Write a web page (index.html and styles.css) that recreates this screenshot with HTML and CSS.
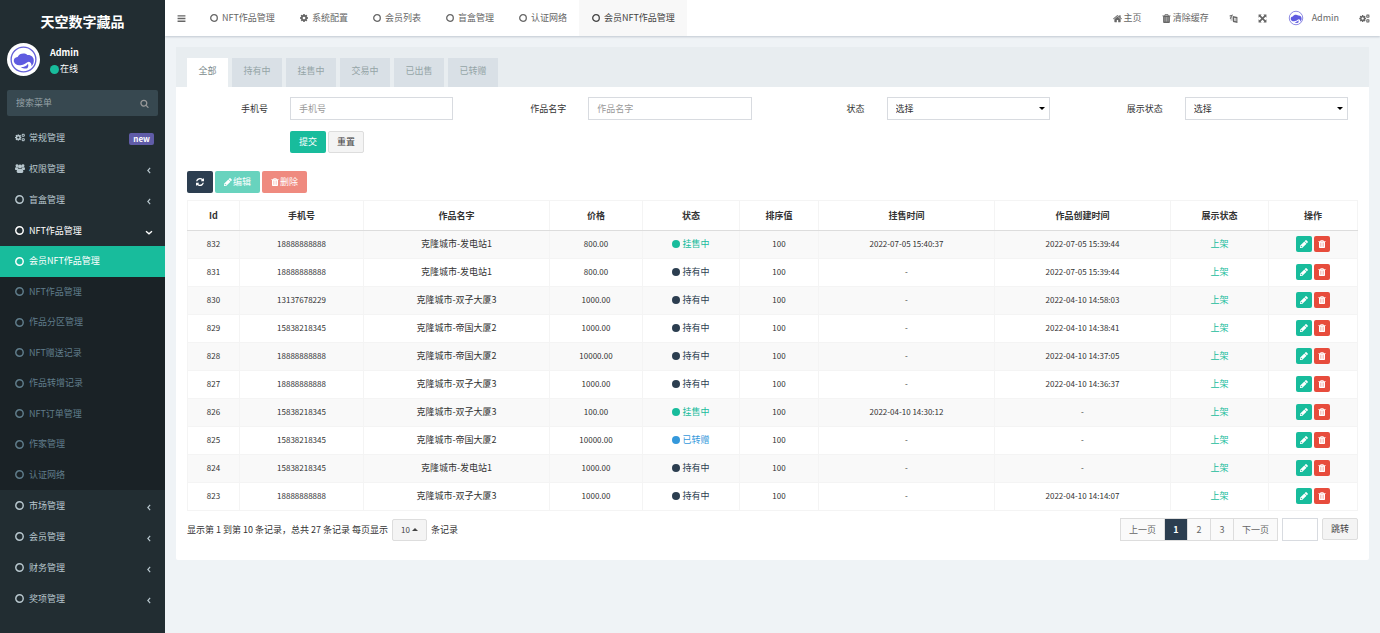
FILE: index.html
```html
<!DOCTYPE html>
<html lang="zh-CN">
<head>
    <meta charset="UTF-8">
    <meta name="viewport" content="width=device-width, initial-scale=1.0">
    <title>会员NFT作品管理</title>
    <link rel="stylesheet" href="styles.css">
</head>
<body>

    <svg class="sprite" aria-hidden="true">
        <symbol id="i-circle" viewBox="0 0 16 16"><circle cx="8" cy="8" r="6.6" fill="none" stroke="currentColor" stroke-width="2.600"/></symbol>
        <symbol id="i-dot" viewBox="0 0 16 16"><circle cx="8" cy="8" r="8"/></symbol>
        <symbol id="i-bars" viewBox="0 0 16 16"><path d="M1 2h14v2.400H1zM1 6.800h14v2.400H1zM1 11.600h14V14H1z"/></symbol>
        <symbol id="i-cog" viewBox="128 128 1536 1536"><path d="M1152 896q0-106-75-181t-181-75-181 75-75 181 75 181 181 75 181-75 75-181zm512-109v222q0 12-8 23t-20 13l-185 28q-19 54-39 91 35 50 107 138 10 12 10 25t-9 23q-27 37-99 108t-94 71q-12 0-26-9l-138-108q-44 23-91 38-16 136-29 186-7 28-36 28h-222q-14 0-24.5-8.5t-11.5-21.5l-28-184q-49-16-90-37l-141 107q-10 9-25 9-14 0-25-11-126-114-165-168-7-10-7-23 0-12 8-23 15-21 51-66.5t54-70.5q-27-50-41-99l-183-27q-13-2-21-12.5t-8-23.5v-222q0-12 8-23t19-13l186-28q14-46 39-92-40-57-107-138-10-12-10-24 0-10 9-23 26-36 98.5-107.5t94.5-71.5q13 0 26 10l138 107q44-23 91-38 16-136 29-186 7-28 36-28h222q14 0 24.5 8.5t11.5 21.5l28 184q49 16 90 37l142-107q9-9 24-9 13 0 25 10 129 119 165 170 7 8 7 22 0 12-8 23-15 21-51 66.5t-54 70.5q26 50 41 98l183 28q13 2 21 12.5t8 23.5z"/></symbol>
        <symbol id="i-cogs" viewBox="0 0 19 16">
            <use href="#i-cog" x="0" y="1.800" width="12.500" height="12.500"/>
            <use href="#i-cog" x="12" y="0" width="7" height="7.500"/>
            <use href="#i-cog" x="12" y="8.500" width="7" height="7.500"/>
        </symbol>
        <symbol id="i-group" viewBox="0 0 18 16"><circle cx="3.600" cy="3" r="2.600"/><circle cx="14.400" cy="3" r="2.600"/><circle cx="9" cy="4.600" r="3.600"/><path d="M0 8.400C0 6.600.6 5.600 2 5.600h3c.2 1.400.8 2.600 1.800 3.400-1.600.2-2.600.8-3 1.600H1.800C.7 10.600 0 10 0 8.400zM18 8.400c0-1.800-.6-2.800-2-2.800h-3c-.2 1.400-.8 2.600-1.800 3.400 1.600.2 2.600.8 3 1.600h2c1.100 0 1.800-.6 1.800-2.200zM3 13.600C3 10.800 4.200 8.800 6 8.800h6c1.800 0 3 2 3 4.800 0 1.500-1 2.400-2.400 2.400H5.400C4 16 3 15.100 3 13.600z"/></symbol>
        <symbol id="i-search" viewBox="0 0 1792 1792"><path d="M1216 832q0-185-131.5-316.5t-316.5-131.5-316.5 131.5-131.5 316.5 131.5 316.5 316.5 131.5 316.5-131.5 131.5-316.5zm512 832q0 52-38 90t-90 38q-54 0-90-38l-343-342q-179 124-399 124-143 0-273.5-55.5t-225-150-150-225-55.5-273.5 55.5-273.5 150-225 225-150 273.5-55.5 273.5 55.5 225 150 150 225 55.5 273.5q0 220-124 399l343 343q37 37 37 90z"/></symbol>
        <symbol id="i-home" viewBox="64 128 1664 1472"><path d="M1472 992v480q0 26-19 45t-45 19h-384v-384h-256v384h-384q-26 0-45-19t-19-45v-480q0-1 .5-3t.5-3l575-474 575 474q1 2 1 6zm223-69l-62 74q-8 9-21 11h-3q-13 0-21-7l-692-577-692 577q-12 8-24 7-13-2-21-11l-62-74q-8-10-7-23.5t11-21.5l719-599q32-26 76-26t76 26l244 204v-195q0-14 9-23t23-9h192q14 0 23 9t9 23v408l219 182q10 8 11 21.5t-7 23.5z"/></symbol>
        <symbol id="i-trash" viewBox="128 128 1536 1536"><path d="M704 1376v-704q0-14-9-23t-23-9h-64q-14 0-23 9t-9 23v704q0 14 9 23t23 9h64q14 0 23-9t9-23zm256 0v-704q0-14-9-23t-23-9h-64q-14 0-23 9t-9 23v704q0 14 9 23t23 9h64q14 0 23-9t9-23zm256 0v-704q0-14-9-23t-23-9h-64q-14 0-23 9t-9 23v704q0 14 9 23t23 9h64q14 0 23-9t9-23zm-544-992h448l-48-117q-7-9-17-11h-317q-10 2-17 11zm928 32v64q0 14-9 23t-23 9h-96v948q0 83-47 143.5t-113 60.5h-832q-66 0-113-58.5t-47-141.5v-952h-96q-14 0-23-9t-9-23v-64q0-14 9-23t23-9h309l70-167q15-37 54-63t79-26h320q40 0 79 26t54 63l70 167h309q14 0 23 9t9 23z"/><path d="M500 600h800v850H500z" opacity=".5"/></symbol>
        <symbol id="i-pencil" viewBox="128 128 1536 1536"><path d="M491 1536l91-91-235-235-91 91v107h128v128h107zm469-1120l416 416-832 832h-416v-416zm683 96q0 53-37 90l-166 166-416-416 166-165q36-38 90-38 53 0 91 38l235 234q37 39 37 91z"/></symbol>
        <symbol id="i-refresh" viewBox="128 128 1536 1536"><path d="M1639 1056q0 5-1 7-64 268-268 434.5t-478 166.5q-146 0-282.5-55t-243.5-157l-129 129q-19 19-45 19t-45-19-19-45v-448q0-26 19-45t45-19h448q26 0 45 19t19 45-19 45l-137 137q71 66 161 102t187 36q134 0 250-65t186-179q11-17 53-117 8-23 30-23h192q13 0 22.5 9.500t9.500 22.500zm25-800v448q0 26-19 45t-45 19h-448q-26 0-45-19t-19-45 19-45l138-138q-148-137-349-137-134 0-250 65t-186 179q-11 17-53 117-8 23-30 23h-199q-13 0-22.500-9.500t-9.500-22.500v-7q65-268 270-434.500t480-166.500q146 0 284 55.500t245 156.500l130-129q19-19 45-19t45 19 19 45z"/></symbol>
        <symbol id="i-lang" viewBox="0 0 16 16"><path d="M1 2.500l6-1.500v1.800l-2 .5c.2 2-.6 4-2.600 5.700L1.200 7.800C2.600 6.600 3.300 5.200 3.200 3.700L1 4.200zM7 3.500l8 2V16l-8-2zm2 3v5.500l4 1V7.500z"/><path d="M1 4h6v8H3z" opacity=".35"/><path d="M9.700 7.500h2.600v4.800H9.700z" opacity=".45"/></symbol>
        <symbol id="i-expand" viewBox="0 0 16 16"><path d="M1 1h5.500L4.800 2.700 8 5.900l3.200-3.200L9.500 1H15v5.500l-1.700-1.700L10.100 8l3.200 3.200L15 9.500V15H9.500l1.700-1.700L8 10.100l-3.200 3.200L6.500 15H1V9.500l1.700 1.700L5.900 8 2.700 4.800 1 6.500z"/></symbol>
        <symbol id="i-left" viewBox="0 0 8 12"><path d="M6 1.500L2 6l4 4.500" fill="none" stroke="currentColor" stroke-width="2"/></symbol>
        <symbol id="i-down" viewBox="0 0 12 8"><path d="M1.500 2L6 6l4.500-4" fill="none" stroke="currentColor" stroke-width="2"/></symbol>
        <symbol id="i-logo" viewBox="0 0 32 32">
            <circle cx="16" cy="16" r="16" fill="#fff"/>
            <circle cx="16" cy="16" r="12" fill="none" stroke="#6460d8" stroke-width="1.300"/>
            <path d="M6.800 18.500C6 15.800 7.800 13.600 10.300 13.500 12 10 17 9.200 19.800 11.700 23.200 11.300 26 13.700 26 17c0 2.300-.8 4.300-2.200 5.500.1-2.300-.9-3.800-2.600-4.200-2.200.2-3.300 2.900-7 3-3.500.9-6.700-.2-7.400-2.800z" fill="#5f5be0"/>
            <path d="M13.500 23.300c3.200 0 5.600-1.200 6.800-3.300.7 1.600.4 3.200-.6 4.600-2.200.6-4.500 0-6.200-1.300z" fill="#5f5be0"/>
        </symbol>
    </svg>

    <aside class="sidebar">
        <a href="#" class="brand">天空数字藏品</a>
        <div class="user-panel">
            <svg class="avatar"><use href="#i-logo"/></svg>
            <div class="user-info">
                <strong>Admin</strong>
                <span><svg class="icon text-success"><use href="#i-dot"/></svg> 在线</span>
            </div>
        </div>
        <form class="sidebar-form">
            <input type="text" placeholder="搜索菜单" aria-label="搜索菜单">
            <button type="button" aria-label="搜索"><svg class="icon"><use href="#i-search"/></svg></button>
        </form>
        <ul class="menu">
            <li><a href="#"><svg class="icon icon-wide"><use href="#i-cogs"/></svg>常规管理<span class="badge">new</span></a></li>
            <li><a href="#"><svg class="icon icon-wide"><use href="#i-group"/></svg>权限管理<svg class="arrow"><use href="#i-left"/></svg></a></li>
            <li><a href="#"><svg class="icon"><use href="#i-circle"/></svg>盲盒管理<svg class="arrow"><use href="#i-left"/></svg></a></li>
            <li class="open">
                <a href="#"><svg class="icon"><use href="#i-circle"/></svg>NFT作品管理<svg class="arrow"><use href="#i-down"/></svg></a>
                <ul class="submenu">
                    <li class="active"><a href="#"><svg class="icon"><use href="#i-circle"/></svg>会员NFT作品管理</a></li>
                    <li><a href="#"><svg class="icon"><use href="#i-circle"/></svg>NFT作品管理</a></li>
                    <li><a href="#"><svg class="icon"><use href="#i-circle"/></svg>作品分区管理</a></li>
                    <li><a href="#"><svg class="icon"><use href="#i-circle"/></svg>NFT赠送记录</a></li>
                    <li><a href="#"><svg class="icon"><use href="#i-circle"/></svg>作品转增记录</a></li>
                    <li><a href="#"><svg class="icon"><use href="#i-circle"/></svg>NFT订单管理</a></li>
                    <li><a href="#"><svg class="icon"><use href="#i-circle"/></svg>作家管理</a></li>
                    <li><a href="#"><svg class="icon"><use href="#i-circle"/></svg>认证网络</a></li>
                </ul>
            </li>
            <li><a href="#"><svg class="icon"><use href="#i-circle"/></svg>市场管理<svg class="arrow"><use href="#i-left"/></svg></a></li>
            <li><a href="#"><svg class="icon"><use href="#i-circle"/></svg>会员管理<svg class="arrow"><use href="#i-left"/></svg></a></li>
            <li><a href="#"><svg class="icon"><use href="#i-circle"/></svg>财务管理<svg class="arrow"><use href="#i-left"/></svg></a></li>
            <li><a href="#"><svg class="icon"><use href="#i-circle"/></svg>奖项管理<svg class="arrow"><use href="#i-left"/></svg></a></li>
        </ul>
    </aside>

    <div class="main">
        <header class="navbar">
            <button type="button" class="toggle" aria-label="菜单"><svg class="icon"><use href="#i-bars"/></svg></button>
            <nav class="nav-tabs">
                <a href="#"><svg class="icon"><use href="#i-circle"/></svg>NFT作品管理</a>
                <a href="#"><svg class="icon"><use href="#i-cog"/></svg>系统配置</a>
                <a href="#"><svg class="icon"><use href="#i-circle"/></svg>会员列表</a>
                <a href="#"><svg class="icon"><use href="#i-circle"/></svg>盲盒管理</a>
                <a href="#"><svg class="icon"><use href="#i-circle"/></svg>认证网络</a>
                <a href="#" class="active"><svg class="icon"><use href="#i-circle"/></svg>会员NFT作品管理</a>
            </nav>
            <div class="nav-right">
                <a href="#"><svg class="icon"><use href="#i-home"/></svg>主页</a>
                <a href="#"><svg class="icon"><use href="#i-trash"/></svg>清除缓存</a>
                <a href="#" aria-label="语言"><svg class="icon"><use href="#i-lang"/></svg></a>
                <a href="#" aria-label="全屏"><svg class="icon"><use href="#i-expand"/></svg></a>
                <a href="#" class="nav-user"><svg class="avatar-small"><use href="#i-logo"/></svg>Admin</a>
                <a href="#" aria-label="设置"><svg class="icon icon-wide"><use href="#i-cogs"/></svg></a>
            </div>
        </header>

        <main class="panel">
            <nav class="panel-tabs">
                <a href="#" class="active">全部</a>
                <a href="#">持有中</a>
                <a href="#">挂售中</a>
                <a href="#">交易中</a>
                <a href="#">已出售</a>
                <a href="#">已转赠</a>
            </nav>

            <form class="search-form">
                <div class="field">
                    <label for="mobile">手机号</label>
                    <input type="text" id="mobile" placeholder="手机号">
                </div>
                <div class="field">
                    <label for="name">作品名字</label>
                    <input type="text" id="name" placeholder="作品名字">
                </div>
                <div class="field">
                    <label for="status">状态</label>
                    <div class="select"><select id="status"><option>选择</option></select></div>
                </div>
                <div class="field">
                    <label for="show">展示状态</label>
                    <div class="select"><select id="show"><option>选择</option></select></div>
                </div>
                <div class="field">
                    <div class="field-buttons">
                        <button type="button" class="btn btn-success">提交</button>
                        <button type="button" class="btn btn-default">重置</button>
                    </div>
                </div>
            </form>

            <div class="panel-body">
                <div class="toolbar">
                    <button type="button" class="btn btn-primary" aria-label="刷新"><svg class="icon"><use href="#i-refresh"/></svg></button>
                    <button type="button" class="btn btn-success" disabled><svg class="icon"><use href="#i-pencil"/></svg>编辑</button>
                    <button type="button" class="btn btn-danger" disabled><svg class="icon"><use href="#i-trash"/></svg>删除</button>
                </div>

                <table class="table">
                    <thead>
                        <tr>
                            <th class="w-id">Id</th>
                            <th class="w-mobile">手机号</th>
                            <th class="w-name">作品名字</th>
                            <th class="w-price">价格</th>
                            <th class="w-status">状态</th>
                            <th class="w-sort">排序值</th>
                            <th class="w-time">挂售时间</th>
                            <th class="w-time">作品创建时间</th>
                            <th class="w-show">展示状态</th>
                            <th class="w-action">操作</th>
                        </tr>
                    </thead>
                    <tbody id="rows"></tbody>
                </table>

                <div class="table-footer">
                    <div class="page-info">
                        显示第 1 到第 10 条记录，总共 27 条记录 每页显示
                        <button type="button" class="btn btn-default page-size">10<span class="caret-up"></span></button>
                        条记录
                    </div>
                    <div class="pager">
                        <ul class="pagination">
                            <li><a href="#">上一页</a></li>
                            <li class="active"><a href="#">1</a></li>
                            <li><a href="#">2</a></li>
                            <li><a href="#">3</a></li>
                            <li><a href="#">下一页</a></li>
                        </ul>
                        <input type="text" class="jump" aria-label="页码">
                        <button type="button" class="btn btn-default">跳转</button>
                    </div>
                </div>
            </div>
        </main>
    </div>

    <script src="script.js"></script>
</body>
</html>
```

FILE: styles.css
```css
* {
    box-sizing: border-box;
}
body {
    margin: 0;
    display: flex;
    min-height: 100vh;
    background-color: #eff3f6;
    color: #333;
    font-family: "Noto Sans CJK SC", sans-serif;
    font-size: 9px;
    line-height: 14px;
}
a {
    color: inherit;
    text-decoration: none;
}
ul {
    list-style: none;
    margin: 0;
    padding: 0;
}
input, select, button {
    font: inherit;
    color: inherit;
    margin: 0;
}
button {
    cursor: pointer;
}
.sprite {
    position: absolute;
    width: 0;
    height: 0;
}
.icon {
    width: 9px;
    height: 9px;
    fill: currentColor;
    flex: none;
}
.icon-wide {
    width: 11px;
}
.text-success {
    color: #18bc9c;
}
.text-primary {
    color: #2c3e50;
}
.text-info {
    color: #3498db;
}

/* sidebar */
.sidebar {
    width: 165px;
    flex: none;
    background-color: #222d32;
    color: #b8c7ce;
}
.brand {
    display: block;
    padding-top: 4px;
    height: 38px;
    line-height: 34px;
    font-size: 14px;
    font-weight: bold;
    text-align: center;
    color: #fff;
}
.user-panel {
    display: flex;
    align-items: flex-end;
    gap: 10px;
    padding: 5px 7px;
    color: #fff;
}
.avatar {
    width: 33px;
    height: 33px;
}
.user-info {
    display: flex;
    flex-direction: column;
    gap: 2px;
}
.user-info span {
    display: flex;
    align-items: center;
    gap: 1px;
}
.sidebar-form {
    display: flex;
    align-items: center;
    height: 26px;
    margin: 9px 7px 6px;
    background-color: #374850;
    border-radius: 2px;
}
.sidebar-form input {
    flex: 1;
    min-width: 0;
    padding: 0 9px;
    background: none;
    border: 0;
}
.sidebar-form input::placeholder {
    color: #96a1a6;
}
.sidebar-form button {
    display: flex;
    padding: 9px;
    border: 0;
    background: none;
    color: #999;
}
.menu a {
    display: flex;
    align-items: center;
    gap: 5px;
    height: 31px;
    padding: 0 11px 0 15px;
}
.menu .icon-wide {
    width: 10px;
    margin-right: -1px;
}
.badge {
    margin: 3px 0 0 auto;
    padding: 0 4px;
    line-height: 12px;
    border-radius: 2px;
    background-color: #605ca8;
    color: #fff;
    font-size: 8px;
    font-weight: bold;
}
.arrow {
    width: 8px;
    height: 7px;
    margin: 3px 1px 0 auto;
    flex: none;
}
.menu .open > a {
    color: #fff;
}
.submenu {
    display: grid;
    grid-auto-rows: 1fr;
    height: 244px;
    background-color: #1a2226;
    color: #607d8b;
}
.submenu a {
    height: 100%;
}
.submenu .active {
    background-color: #18bc9c;
    color: #fff;
}

/* top bar */
.main {
    flex: 1;
    min-width: 0;
}
.navbar {
    display: flex;
    height: 36px;
    background-color: #fff;
    color: #666;
    box-shadow: 0 1px 2px rgba(0, 30, 60, 0.2);
}
.toggle {
    display: flex;
    align-items: center;
    width: 32px;
    padding: 0 12px;
    border: 0;
    background: none;
}
.nav-tabs, .nav-right {
    display: flex;
}
.nav-tabs a {
    display: flex;
    align-items: center;
    gap: 4px;
    padding: 0 12px 0 13px;
}
.nav-tabs .icon {
    width: 8px;
    height: 8px;
}
.nav-tabs .active {
    background-color: #f8f8f8;
    color: #444;
}
.nav-right {
    margin-left: auto;
}
.nav-right a {
    display: flex;
    align-items: center;
    gap: 2px;
    padding: 0 10px;
}
.nav-right .nav-user {
    gap: 7px;
}
.avatar-small {
    width: 18px;
    height: 18px;
}

/* panel */
.panel {
    margin: 11px 11px 0;
    padding-bottom: 19px;
    background-color: #fff;
    border-radius: 2px;
}
.panel-tabs {
    display: flex;
    gap: 4px;
    padding: 11px 11px 0;
    background-color: #e8edf0;
    color: #95a5a6;
}
.panel-tabs a {
    padding: 6px 11px 9px;
    min-width: 41px;
    background-color: #d9e0e6;
    text-align: center;
}
.panel-tabs a + a {
    min-width: 50px;
}
.panel-tabs .active {
    background-color: #fff;
    color: #7b8a8b;
}
.search-form {
    display: grid;
    grid-template-columns: repeat(4, 1fr);
    row-gap: 11px;
    padding-top: 10px;
}
.field {
    display: flex;
    align-items: center;
    gap: 22px;
    padding-right: 21px;
}
.field label {
    width: 92px;
    text-align: right;
}
.field input, .select {
    flex: 1;
    min-width: 0;
}
.field input, .field select, .jump {
    height: 23px;
    padding: 0 8px;
    border: 1px solid #d8dbe0;
    border-radius: 0;
    background-color: #fff;
}
.field input::placeholder {
    color: #999;
}
.select {
    position: relative;
}
.field select {
    display: block;
    width: 100%;
    appearance: none;
}
.select::after {
    content: "";
    position: absolute;
    right: 5px;
    top: 10px;
    border: 3px solid transparent;
    border-top-color: #000;
    border-bottom: 0;
    pointer-events: none;
}
.field-buttons {
    display: flex;
    gap: 2px;
    margin-left: 114px;
}
.btn {
    display: inline-flex;
    align-items: center;
    gap: 1px;
    height: 22px;
    padding: 0 8px;
    border: 1px solid transparent;
    border-radius: 2px;
    color: #fff;
    white-space: nowrap;
}
.btn .icon {
    width: 8px;
    height: 8px;
}
.btn:disabled {
    opacity: 0.65;
}
.btn-success {
    background-color: #18bc9c;
}
.btn-primary {
    background-color: #2c3e50;
}
.btn-danger {
    background-color: #e74c3c;
}
.btn-default {
    background-color: #f4f4f4;
    border-color: #ddd;
    color: #444;
}
.btn-xs {
    width: 16px;
    height: 16px;
    padding: 0;
    justify-content: center;
}
.panel-body {
    padding: 18px 11px 0;
}
.toolbar {
    display: flex;
    gap: 2px;
    margin-bottom: 7px;
}

/* table */
.table {
    width: 100%;
    table-layout: fixed;
    border-collapse: collapse;
    text-align: center;
}
.table th, .table td {
    padding: 0;
    border: 1px solid #f4f4f4;
}
.table th {
    height: 30px;
    border-bottom-color: #ddd;
}
.table td {
    height: 28px;
    padding-bottom: 2px;
}
.table tbody tr:nth-child(odd) {
    background-color: #f9f9f9;
}
.table .num {
    font-size: 8px;
}
.status .icon {
    width: 8px;
    height: 8px;
    margin-right: 2px;
    vertical-align: -1px;
}
.actions {
    display: flex;
    justify-content: center;
    gap: 2px;
}
.w-id {
    width: 52px;
}
.w-mobile {
    width: 124px;
}
.w-name {
    width: 186px;
}
.w-price {
    width: 93px;
}
.w-status {
    width: 97px;
}
.w-sort {
    width: 79px;
}
.w-time {
    width: 176px;
}
.w-show {
    width: 98px;
}
.w-action {
    width: 89px;
}

/* table footer */
.table-footer {
    display: flex;
    justify-content: space-between;
    padding-top: 7px;
}
.page-info {
    display: flex;
    align-items: center;
    gap: 4px;
}
.page-size {
    gap: 2px;
    font-size: 8px;
}
.caret-up {
    border: 3px solid transparent;
    border-bottom-color: #444;
    border-top: 0;
}
.pager {
    display: flex;
    gap: 4px;
}
.pagination {
    display: flex;
    border: 1px solid #ddd;
    background-color: #fafafa;
    color: #666;
}
.pagination a {
    display: block;
    min-width: 22px;
    padding: 0 8px;
    line-height: 21px;
    text-align: center;
}
.pagination li + li {
    border-left: 1px solid #ddd;
}
.pagination .active {
    background-color: #2c3e50;
    color: #fff;
    font-weight: bold;
}
.jump {
    width: 36px;
}
```

FILE: script.js
```js
var rows = [
    [832, '18888888888', '克隆城市-发电站1', '800.00', '挂售中', '2022-07-05 15:40:37', '2022-07-05 15:39:44'],
    [831, '18888888888', '克隆城市-发电站1', '800.00', '持有中', '-', '2022-07-05 15:39:44'],
    [830, '13137678229', '克隆城市-双子大厦3', '1000.00', '持有中', '-', '2022-04-10 14:58:03'],
    [829, '15838218345', '克隆城市-帝国大厦2', '1000.00', '持有中', '-', '2022-04-10 14:38:41'],
    [828, '18888888888', '克隆城市-帝国大厦2', '10000.00', '持有中', '-', '2022-04-10 14:37:05'],
    [827, '18888888888', '克隆城市-双子大厦3', '1000.00', '持有中', '-', '2022-04-10 14:36:37'],
    [826, '15838218345', '克隆城市-双子大厦3', '100.00', '挂售中', '2022-04-10 14:30:12', '-'],
    [825, '15838218345', '克隆城市-帝国大厦2', '10000.00', '已转赠', '-', '-'],
    [824, '15838218345', '克隆城市-发电站1', '1000.00', '持有中', '-', '-'],
    [823, '18888888888', '克隆城市-双子大厦3', '1000.00', '持有中', '-', '2022-04-10 14:14:07']
];

var colors = {
    '挂售中': 'text-success',
    '持有中': 'text-primary',
    '已转赠': 'text-info'
};

function icon(name) {
    return '<svg class="icon"><use href="#i-' + name + '"/></svg>';
}

document.getElementById('rows').innerHTML = rows.map(function (r) {
    return `<tr>
        <td class="num">${r[0]}</td>
        <td class="num">${r[1]}</td>
        <td>${r[2]}</td>
        <td class="num">${r[3]}</td>
        <td><span class="status ${colors[r[4]]}">${icon('dot')}${r[4]}</span></td>
        <td class="num">100</td>
        <td class="num">${r[5]}</td>
        <td class="num">${r[6]}</td>
        <td><span class="text-success">上架</span></td>
        <td><div class="actions">
            <button type="button" class="btn btn-xs btn-success" aria-label="编辑">${icon('pencil')}</button>
            <button type="button" class="btn btn-xs btn-danger" aria-label="删除">${icon('trash')}</button>
        </div></td>
    </tr>`;
}).join('');
```
